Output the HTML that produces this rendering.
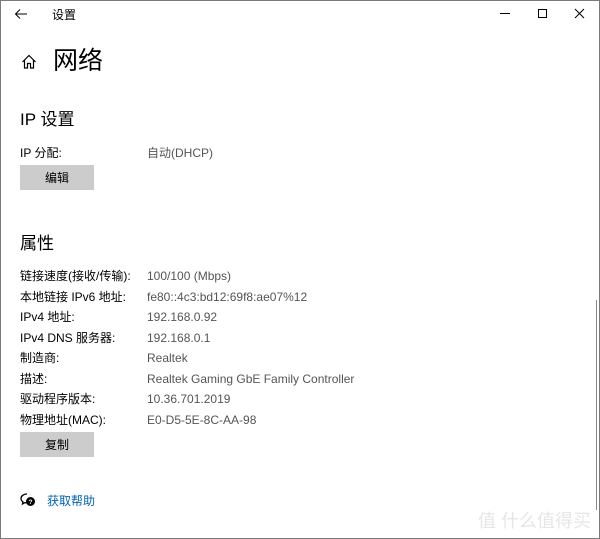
<!DOCTYPE html><html><head><meta charset="utf-8"><style>
body{margin:0;width:600px;height:539px;overflow:hidden;background:#fff;font-family:"Liberation Sans","Noto Sans CJK SC",sans-serif;color:#000;position:relative}
.a{position:absolute;white-space:nowrap;line-height:1}
.l{font-size:12px;left:20px}
.v{font-size:12px;left:147px;color:#555}
.btn{position:absolute;left:20px;width:74px;height:25px;background:#ccc;font-size:12px;text-align:center;line-height:26px}
</style></head><body>
<div style="position:absolute;left:0;top:0;width:598px;height:537px;border:1px solid #7a7a7a"></div>
<div style="position:absolute;left:596px;top:300px;width:1px;height:210px;background:#888"></div>
<svg class="a" style="left:14px;top:8px" width="14" height="12"><path d="M13 6H2M6 1.5L1.5 6 6 10.5" stroke="#000" fill="none" stroke-width="1"/></svg>
<div class="a" style="left:52px;top:9px;font-size:12px">设置</div>
<svg class="a" style="left:500px;top:8px" width="90" height="12"><path d="M0 5.5H10" stroke="#000"/><rect x="38.5" y="1.5" width="8" height="8" fill="none" stroke="#000"/><path d="M75 1L84 10M84 1L75 10" stroke="#000"/></svg>
<svg class="a" style="left:21px;top:54px" width="16" height="16"><path d="M1.5 8L8 1.5 14.5 8M3.5 6V14H6.5V9.5H9.5V14H12.5V6" stroke="#000" fill="none" stroke-width="1.2"/></svg>
<div class="a" style="left:53px;top:49px;font-size:25px">网络</div>
<div class="a" style="left:20px;top:111px;font-size:17px">IP 设置</div>
<div class="a l" style="top:147px">IP 分配:</div><div class="a v" style="top:147px">自动(DHCP)</div>
<div class="btn" style="top:165px">编辑</div>
<div class="a" style="left:20px;top:235px;font-size:17px">属性</div>
<div class="a l" style="top:270px">链接速度(接收/传输):</div><div class="a v" style="top:270px">100/100 (Mbps)</div>
<div class="a l" style="top:291px">本地链接 IPv6 地址:</div><div class="a v" style="top:291px">fe80::4c3:bd12:69f8:ae07%12</div>
<div class="a l" style="top:311px">IPv4 地址:</div><div class="a v" style="top:311px">192.168.0.92</div>
<div class="a l" style="top:332px">IPv4 DNS 服务器:</div><div class="a v" style="top:332px">192.168.0.1</div>
<div class="a l" style="top:352px">制造商:</div><div class="a v" style="top:352px">Realtek</div>
<div class="a l" style="top:373px">描述:</div><div class="a v" style="top:373px">Realtek Gaming GbE Family Controller</div>
<div class="a l" style="top:393px">驱动程序版本:</div><div class="a v" style="top:393px">10.36.701.2019</div>
<div class="a l" style="top:414px">物理地址(MAC):</div><div class="a v" style="top:414px">E0-D5-5E-8C-AA-98</div>
<div class="btn" style="top:432px">复制</div>
<svg class="a" style="left:20px;top:493px" width="16" height="14"><path d="M7 1C3.5 1 1 3 1 5.5c0 1.5.8 2.6 2 3.3L2.5 11 5 9.6c.6.2 1.3.3 2 .3" stroke="#000" fill="none" stroke-width="1.3"/><circle cx="10.5" cy="8.5" r="4.5" fill="#000"/><text x="10.5" y="11" font-size="6.5" fill="#fff" text-anchor="middle" font-family="Liberation Sans" font-weight="bold">?</text></svg>
<div class="a" style="left:47px;top:495px;font-size:12px;color:#0063b1">获取帮助</div>
<div class="a" style="left:478px;top:512px;font-size:18px;color:#e6e6e6">值 什么值得买</div>
</body></html>
